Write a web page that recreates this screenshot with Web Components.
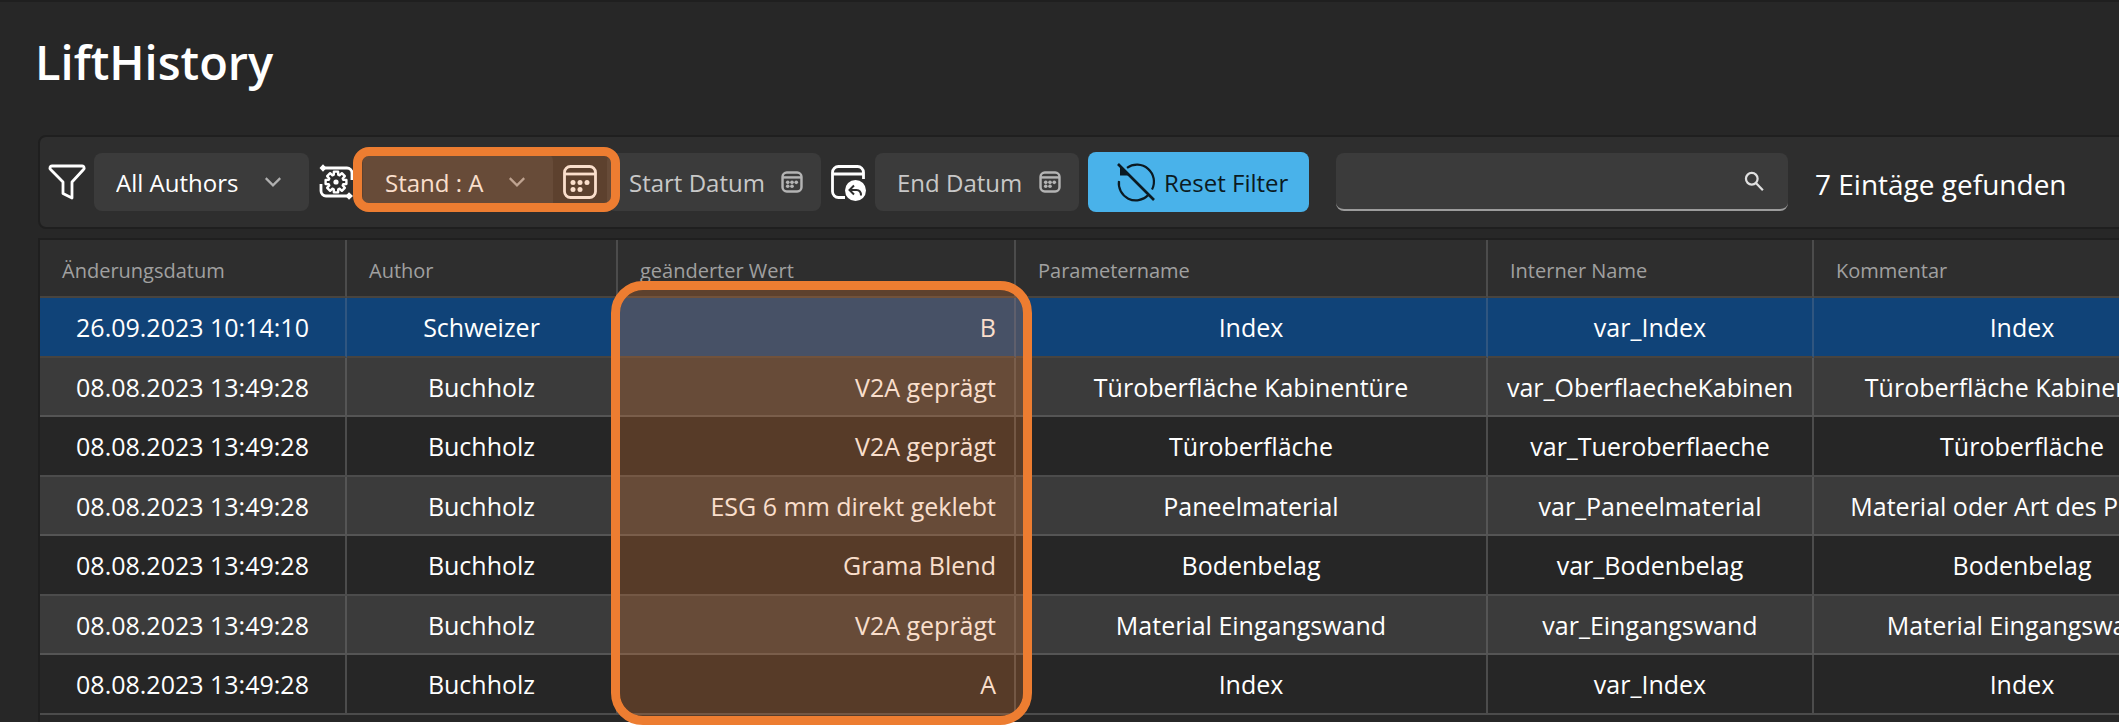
<!DOCTYPE html>
<html lang="de">
<head>
<meta charset="utf-8">
<title>LiftHistory</title>
<style>
  html { background: #fff; }
  body { margin: 0; overflow-x: clip; font-family: "Open Sans", "Noto Sans", sans-serif; color: #fff; }
</style>
</head>
<body>
<lift-history></lift-history>
<script>
const define = (name, html, setup) => {
  const tpl = document.createElement('template');
  tpl.innerHTML = html;
  customElements.define(name, class extends HTMLElement {
    constructor() {
      super();
      this.attachShadow({ mode: 'open' }).append(tpl.content.cloneNode(true));
    }
    connectedCallback() { if (setup) setup(this, this.shadowRoot); }
  });
};

const gear = (() => {
  const pts = [];
  const n = 8;
  for (let i = 0; i < n; i++) {
    const a = i * 2 * Math.PI / n - Math.PI / 2;
    for (const [d, r] of [[-0.3, 7.6], [-0.2, 10.6], [0.2, 10.6], [0.3, 7.6]]) {
      pts.push((18 + r * Math.cos(a + d)).toFixed(2) + ' ' + (18 + r * Math.sin(a + d)).toFixed(2));
    }
  }
  return 'M' + pts.join('L') + 'Z';
})();

const icons = {
  funnel: `<path d="M3 2h30a2 2 0 0 1 1.500 3.500L23 18v16l-9-4.500V18L1.600 5.500A2 2 0 0 1 3 2Z" fill="none" stroke="currentColor" stroke-width="2.800" stroke-linejoin="round"/>`,
  cycle: `<g fill="none" stroke="currentColor" stroke-width="2.800"><path d="M5 4h24a5 5 0 0 1 5 5v7M31 32H8a5 5 0 0 1-5-5v-7"/><path d="${gear}" stroke-width="2.400" stroke-linejoin="round"/></g>
    <g fill="currentColor"><path d="M1.500 4 5 .2 8.500 4 5 7.800ZM27.500 32l3.500-3.800L35 32l-4 3.800Z"/><circle cx="18" cy="18" r="2.600"/></g>`,
  calendar: `<g fill="none" stroke="currentColor" stroke-width="2.800"><rect x="2.500" y="2.500" width="31" height="31" rx="6"/><path d="M2.500 10h31"/></g>
    <g fill="currentColor"><circle cx="11" cy="18.500" r="2.500"/><circle cx="18" cy="18.500" r="2.500"/><circle cx="25" cy="18.500" r="2.500"/><circle cx="11" cy="25.500" r="2.500"/><circle cx="18" cy="25.500" r="2.500"/></g>`,
  day: `<g fill="none" stroke="currentColor" stroke-width="4"><rect x="2.500" y="2.500" width="31" height="31" rx="7"/><path d="M2.500 10.500h31"/></g>
    <g fill="currentColor"><circle cx="11" cy="18.500" r="3"/><circle cx="18" cy="18.500" r="3"/><circle cx="25" cy="18.500" r="3"/><circle cx="11" cy="25" r="3"/><circle cx="18" cy="25" r="3"/></g>`,
  back: `<g fill="none" stroke="currentColor" stroke-width="2.800"><path d="M15 33.500H8.500a6 6 0 0 1-6-6v-19a6 6 0 0 1 6-6h19a6 6 0 0 1 6 6V15M2.500 10h31"/></g>
    <circle cx="25.500" cy="26.500" r="10.500" fill="currentColor"/><path d="M24 21.500 19.500 26l4.500 4.500M19.500 26h7q4.500 0 4.500 5.500" fill="none" stroke="#2e2e2e" stroke-width="2"/>`,
  reset: `<g fill="none" stroke="currentColor" stroke-width="2.200"><path d="M9 3.900A17 17 0 0 1 34 25.600M30 31.300A17 17 0 0 1 1 17"/><path d="M0 0l36 36" stroke-width="2.600"/></g><path d="M2 2V11.500H11.500Z" fill="currentColor"/>`,
  search: `<g fill="none" stroke="currentColor" stroke-width="4"><circle cx="14" cy="14" r="10.500"/><path d="m21.500 21.500 12.500 13"/></g>`,
  chevron: `<path d="M5 11l13 13 13-13" fill="none" stroke="currentColor" stroke-width="4"/>`
};

define('ui-icon', `
<style>
  :host { display: inline-flex; flex: none; width: var(--size, 36px); height: var(--size, 36px); }
  svg { width: 100%; height: 100%; overflow: visible; }
</style>
<svg viewBox="0 0 36 36" aria-hidden="true"></svg>`,
(el, root) => { root.querySelector('svg').innerHTML = icons[el.getAttribute('name')]; });

define('filter-combo', `
<style>
  :host { display: grid; align-items: center; height: 58px; border-radius: 8px; background: #3b3b3b; }
  select, ui-icon { grid-area: 1 / 1; }
  select { appearance: none; width: 100%; height: 100%; padding: 0 22px; border: 0; background: none; color: #fff; font: inherit; }
  option { background: #3b3b3b; }
  ui-icon { --size: 20px; justify-self: end; margin-right: 26px; color: #b0b0b0; pointer-events: none; }
</style>
<select><option></option></select><ui-icon name="chevron"></ui-icon>`,
(el, root) => {
  root.querySelector('option').textContent = el.getAttribute('value');
  root.querySelector('select').setAttribute('aria-label', el.getAttribute('label'));
});

define('filter-date', `
<style>
  :host { display: flex; align-items: center; box-sizing: border-box; height: 58px; padding: 0 18px 0 22px; border-radius: 8px; background: #3b3b3b; color: #c8c8c8; }
  input { flex: 1; min-width: 0; padding: 0; border: 0; background: none; color: inherit; font: inherit; outline: 0; }
  input::placeholder { color: inherit; opacity: 1; }
  ui-icon { --size: 22px; color: #b4b4b4; }
</style>
<input type="text"><ui-icon name="day"></ui-icon>`,
(el, root) => {
  const input = root.querySelector('input');
  input.placeholder = el.getAttribute('label');
  input.setAttribute('aria-label', el.getAttribute('label'));
});

define('accent-button', `
<style>
  :host { display: block; }
  button { display: flex; align-items: center; gap: 10px; width: 100%; height: 60px; padding: 0 0 0 30px; border: 0; border-radius: 8px; background: #49b2ea; color: #0b1a22; font: inherit; white-space: nowrap; }
</style>
<button type="button"><ui-icon name="reset"></ui-icon><slot></slot></button>`);

define('search-box', `
<style>
  :host { display: flex; align-items: center; box-sizing: border-box; height: 58px; padding: 0 24px 0 20px; border-bottom: 2px solid #9c9c9c; border-radius: 8px; background: #3b3b3b; }
  input { flex: 1; min-width: 0; border: 0; background: none; color: inherit; font: inherit; outline: 0; }
  ui-icon { --size: 20px; color: #e0e0e0; }
</style>
<input type="search" aria-label="Suche"><ui-icon name="search"></ui-icon>`);

define('filter-bar', `
<style>
  :host { display: flex; align-items: center; box-sizing: border-box; height: 94px; margin-right: -8px; border: 2px solid #1f1f1f; border-radius: 8px; background: #2e2e2e; font-size: 24px; }
  .icon { flex: none; display: flex; justify-content: center; width: 54px; }
  .authors { flex: none; width: 215px; }
  .mark { position: relative; flex: none; display: flex; align-items: center; }
  .mark::after { content: ""; position: absolute; inset: -6px -13px -1px -10px; border: 9px solid #ed7d31; border-radius: 16px; background: rgb(237 125 49 / .25); background-clip: padding-box; pointer-events: none; z-index: 1; }
  .stand { width: 190px; }
  .start { flex: none; width: 214px; }
  .end { flex: none; width: 204px; }
  accent-button { flex: none; width: 221px; margin: 0 27px 0 9px; }
  search-box { flex: none; width: 452px; }
  output { margin-left: 27px; padding-top: 4px; font-size: 28px; white-space: nowrap; }
</style>
<span class="icon"><ui-icon name="funnel"></ui-icon></span>
<filter-combo class="authors" label="Author" value="All Authors"></filter-combo>
<span class="icon"><ui-icon name="cycle"></ui-icon></span>
<div class="mark">
  <filter-combo class="stand" label="Stand" value="Stand : A"></filter-combo>
  <span class="icon"><ui-icon name="calendar"></ui-icon></span>
</div>
<filter-date class="start" label="Start Datum"></filter-date>
<span class="icon"><ui-icon name="back"></ui-icon></span>
<filter-date class="end" label="End Datum"></filter-date>
<accent-button>Reset Filter</accent-button>
<search-box></search-box>
<output>7 Eintäge gefunden</output>`);

define('history-grid', `
<style>
  :host { display: block; position: relative; }
  .view { overflow: hidden; padding-bottom: 7px; border: solid #1f1f1f; border-width: 2px 0 0 2px; }
  table { table-layout: fixed; width: 2192px; border-collapse: separate; border-spacing: 0; font-size: 25px; }
  th, td { box-sizing: border-box; padding: 0 18px; border: solid #4c4c4c; border-width: 0 2px 2px 0; overflow: hidden; white-space: nowrap; text-align: center; font-weight: 400; }
  th { height: 58px; padding: 4px 22px 0; background: #2e2e2e; border-bottom-color: #48443f; color: #a0a0a0; font-size: 20px; text-align: left; }
  td { height: 60px; background: #262626; }
  tr:nth-child(even) td { height: 59px; background: #3b3b3b; border-color: #555; }
  tr.selected td { background: #104378; border-color: #305680; border-bottom-color: #48443f; }
  td:nth-child(3) { text-align: right; }
  .mark { position: absolute; left: 573px; top: 43px; bottom: -3px; box-sizing: border-box; width: 421px; border: 9px solid #ed7d31; border-radius: 32px; background: rgb(237 125 49 / .25); background-clip: padding-box; pointer-events: none; }
</style>
<div class="view">
  <table>
    <colgroup><col style="width:307px"><col style="width:271px"><col style="width:398px"><col style="width:472px"><col style="width:326px"><col style="width:418px"></colgroup>
    <thead><tr></tr></thead>
    <tbody></tbody>
  </table>
</div>
<div class="mark"></div>`,
(el, root) => {
  const head = ['Änderungsdatum', 'Author', 'geänderter Wert', 'Parametername', 'Interner Name', 'Kommentar'];
  const d = '08.08.2023 13:49:28';
  const rows = [
    ['26.09.2023 10:14:10', 'Schweizer', 'B', 'Index', 'var_Index', 'Index'],
    [d, 'Buchholz', 'V2A geprägt', 'Türoberfläche Kabinentüre', 'var_OberflaecheKabinen', 'Türoberfläche Kabinentüre'],
    [d, 'Buchholz', 'V2A geprägt', 'Türoberfläche', 'var_Tueroberflaeche', 'Türoberfläche'],
    [d, 'Buchholz', 'ESG 6 mm direkt geklebt', 'Paneelmaterial', 'var_Paneelmaterial', 'Material oder Art des Paneels'],
    [d, 'Buchholz', 'Grama Blend', 'Bodenbelag', 'var_Bodenbelag', 'Bodenbelag'],
    [d, 'Buchholz', 'V2A geprägt', 'Material Eingangswand', 'var_Eingangswand', 'Material Eingangswand'],
    [d, 'Buchholz', 'A', 'Index', 'var_Index', 'Index']
  ];
  root.querySelector('thead tr').innerHTML = head.map(h => `<th scope="col">${h}</th>`).join('');
  root.querySelector('tbody').innerHTML = rows.map((r, i) =>
    `<tr${i ? '' : ' class="selected"'}>${r.map(c => `<td>${c}</td>`).join('')}</tr>`).join('');
});

define('lift-history', `
<style>
  :host { display: block; margin-bottom: 3px; padding-left: 38px; border-top: 2px solid #1f1f1f; background: #272727; }
  h1 { margin: 0 0 0 -3px; padding: 26px 0 39px; font-size: 47px; line-height: 68px; font-weight: 600; }
  filter-bar { margin-bottom: 9px; }
</style>
<h1>LiftHistory</h1>
<filter-bar></filter-bar>
<history-grid></history-grid>`);
</script>
</body>
</html>
